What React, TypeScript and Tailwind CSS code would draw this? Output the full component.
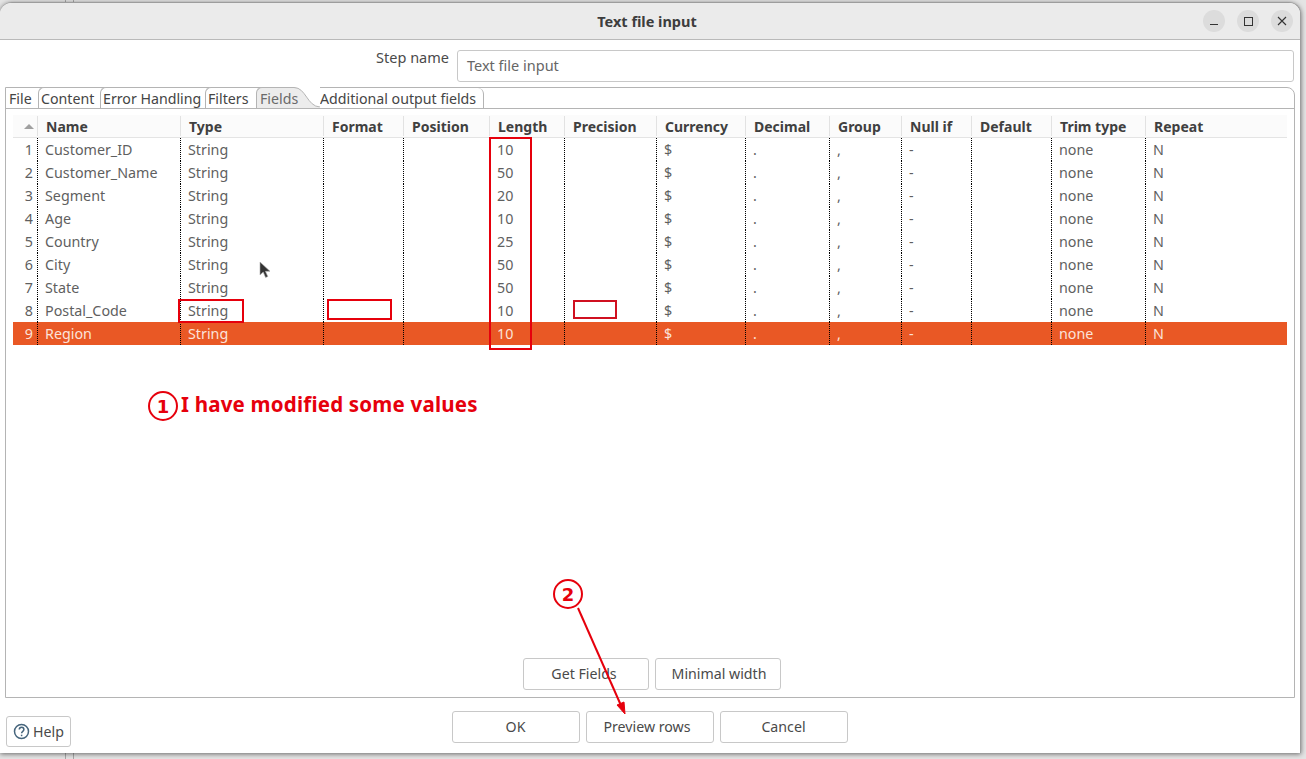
const columns = [
  { label: "Name", width: 143 },
  { label: "Type", width: 143 },
  { label: "Format", width: 80 },
  { label: "Position", width: 86 },
  { label: "Length", width: 75 },
  { label: "Precision", width: 92 },
  { label: "Currency", width: 89 },
  { label: "Decimal", width: 84 },
  { label: "Group", width: 72 },
  { label: "Null if", width: 70 },
  { label: "Default", width: 80 },
  { label: "Trim type", width: 94 },
  { label: "Repeat", width: 142 },
];

const fields = [
  ["Customer_ID", "10"],
  ["Customer_Name", "50"],
  ["Segment", "20"],
  ["Age", "10"],
  ["Country", "25"],
  ["City", "50"],
  ["State", "50"],
  ["Postal_Code", "10"],
  ["Region", "10"],
];

const tabs = [
  { label: "Content", width: 62 },
  { label: "Error Handling", width: 105 },
  { label: "Filters", width: 51 },
];

function PlainButton({ label, className }: { label: string; className: string }) {
  return (
    <button className={`h-[32px] rounded-[3px] border border-[#c8c8c8] bg-white text-[14.2px] text-[#4a4a4a] ${className}`}>
      {label}
    </button>
  );
}

function WindowButton({ children }: { children: React.ReactNode }) {
  return (
    <div className="flex h-[22px] w-[22px] items-center justify-center rounded-full bg-[#dcdcdc]">
      {children}
    </div>
  );
}

function FieldRow({ index, name, length }: { index: number; name: string; length: string }) {
  const selected = index === 9;
  const cells = [name, "String", "", "", length, "", "$", ".", ",", "-", "", "none", "N"];
  return (
    <div className={`flex h-[23px] items-center text-[14.3px] ${selected ? "bg-[#e95825] text-[#fbe3da]" : "text-[#5f5f5f]"}`}>
      <div className="h-full w-[24px] pr-[4px] text-right leading-[23px]">{index}</div>
      {cells.map((cell, i) => (
        <div
          key={columns[i].label}
          style={{ width: columns[i].width }}
          className="h-full border-l border-dotted border-black pl-[7px] leading-[23px]"
        >
          {cell}
        </div>
      ))}
    </div>
  );
}

export default function App() {
  return (
    <div className="relative h-[759px] w-[1306px] overflow-hidden bg-[#e4e4e4] pt-[2px] font-['Noto_Sans',sans-serif] text-[14px]">
      {/* bits of the window behind the dialog */}
      <div className="absolute left-[65px] top-[0px] h-[759px] w-[9px] border-x border-[#a8a8a8]" />

      <div className="relative flex h-[751px] w-[1301px] flex-col overflow-hidden rounded-t-[12px] border-t border-r border-[#9d9d9d] bg-white shadow-[0_1px_5px_rgba(0,0,0,0.55)]">
        {/* title bar */}
        <header className="relative flex h-[37px] shrink-0 items-center justify-center border-b border-[#b9b9b9] bg-[#ebebeb] pr-[6px] pt-[2px]">
          <span className="text-[14.5px] font-bold text-[#3d3d3d]">Text file input</span>
          <div className="absolute right-[7px] top-[7px] flex gap-[12px]">
            <WindowButton>
              <span className="mt-[6px] h-[1px] w-[8px] bg-[#333]" />
            </WindowButton>
            <WindowButton>
              <span className="h-[9px] w-[9px] border border-[#333]" />
            </WindowButton>
            <WindowButton>
              <svg width="10" height="10" viewBox="0 0 10 10" stroke="#333" strokeWidth="1.1">
                <path d="M1 1l8 8M9 1l-8 8" />
              </svg>
            </WindowButton>
          </div>
        </header>

        {/* step name */}
        <div className="flex h-[47px] shrink-0 pt-[10px]">
          <div className="-mt-[2px] w-[449px] text-right text-[14.5px] leading-[18px] text-[#4a4a4a]">Step name</div>
          <div className="ml-[8px] flex h-[32px] w-[837px] items-center rounded-[3px] border border-[#c8c8c8] pl-[9px] text-[14.5px] text-[#666]">
            Text file input
          </div>
        </div>

        {/* tab folder */}
        <div className="ml-[5px] flex h-[611px] w-[1290px] shrink-0 flex-col rounded-tr-[8px] border border-[#b4b4b4]">
          <div className="flex h-[20px] shrink-0 text-[14.2px] leading-[21px] text-[#454545]">
            <div className="w-[32px] pl-[3px]">File</div>
            {tabs.map((tab) => (
              <div
                key={tab.label}
                style={{ width: tab.width }}
                className="-mt-px rounded-tl-[6px] border-t border-l border-[#b4b4b4] bg-white pl-[2px]"
              >
                {tab.label}
              </div>
            ))}
            <div className="relative -mt-px w-[63px] rounded-tl-[6px] border-t border-l border-[#b4b4b4] bg-[#ececec] pl-[3px] text-[#6a6a6a]">
              Fields
              <svg className="absolute right-[-1px] top-[-1px]" width="26" height="21" viewBox="0 0 26 21" fill="none">
                <path d="M0 .5c12 0 13 19 26 19.5V0H0z" fill="#fff" />
                <path d="M0 .5c12 0 13 19 26 19.5" stroke="#b4b4b4" />
              </svg>
            </div>
            <div className="w-[165px] rounded-tr-[6px] border-r border-[#b4b4b4] pl-[1px]">
              Additional output fields
            </div>
          </div>

          <div className="flex min-h-0 flex-1 flex-col border-t border-[#b4b4b4]">
            {/* table */}
            <div className="ml-[7px] mt-[6px] w-[1274px] flex-1">
              <div className="flex h-[23px] items-center border-b border-[#e4e4e4] bg-[#fbfbfb] font-bold text-[#404040]">
                <div className="flex h-full w-[24px] items-center justify-center pl-[7px]">
                  <span className="h-0 w-0 border-x-[5px] border-b-[5px] border-x-transparent border-b-[#a0a0a0]" />
                </div>
                {columns.map((column) => (
                  <div
                    key={column.label}
                    style={{ width: column.width }}
                    className="h-[20px] border-l border-[#e2e2e2] pl-[8px] text-[14px] leading-[22px]"
                  >
                    {column.label}
                  </div>
                ))}
              </div>
              {fields.map(([name, length], i) => (
                <FieldRow key={name} index={i + 1} name={name} length={length} />
              ))}
            </div>

            {/* field buttons */}
            <div className="mb-[7px] flex shrink-0 justify-center gap-[6px] pl-[3px]">
              <PlainButton label="Get Fields" className="w-[126px] pr-[3px]" />
              <PlainButton label="Minimal width" className="w-[126px] pl-[3px]" />
            </div>
          </div>
        </div>

        {/* dialog buttons */}
        <div className="relative flex flex-1 justify-center gap-[6px] pr-[1px] pt-[13px]">
          <PlainButton label="OK" className="w-[128px]" />
          <PlainButton label="Preview rows" className="w-[128px] pr-[5px]" />
          <PlainButton label="Cancel" className="w-[128px]" />
          <button className="absolute left-[6px] top-[18px] flex h-[31px] w-[65px] items-center justify-center gap-[3px] rounded-[3px] border border-[#c8c8c8] text-[14.2px] text-[#4a4a4a]">
            <svg width="17" height="17" viewBox="0 0 17 17" fill="none" stroke="#46657c" strokeWidth="1.5">
              <circle cx="8.5" cy="8.5" r="7" />
              <path d="M6.3 6.6c0-3 4.6-3 4.6 0 0 1.8-2.3 1.7-2.3 3.6" />
              <path d="M8.6 11.7v1.5" />
            </svg>
            Help
          </button>
        </div>
      </div>

      {/* screenshot annotations */}
      <div className="absolute left-[489px] top-[137px] h-[213px] w-[43px] border-2 border-[#e6000c]" />
      <div className="absolute left-[178px] top-[299px] h-[24px] w-[66px] border-2 border-[#e6000c]" />
      <div className="absolute left-[327px] top-[299px] h-[21px] w-[65px] border-2 border-[#e6000c]" />
      <div className="absolute left-[573px] top-[300px] h-[19px] w-[44px] border-2 border-[#d01020]" />
      <div className="absolute left-[148px] top-[391px] flex h-[30px] w-[30px] items-center justify-center rounded-full border-2 border-[#e6000c] font-['DejaVu_Sans',sans-serif] text-[18px] font-bold text-[#e6000c]">
        1
      </div>
      <div className="absolute left-[181px] top-[390px] text-[20.5px] font-bold leading-[28px] tracking-[0.2px] text-[#e6000c]">
        I have modified some values
      </div>
      <div className="absolute left-[553px] top-[579px] flex h-[30px] w-[30px] items-center justify-center rounded-full border-2 border-[#e6000c] font-['DejaVu_Sans',sans-serif] text-[18px] font-bold text-[#e6000c]">
        2
      </div>
      <svg className="absolute left-[570px] top-[600px]" width="64" height="120" viewBox="0 0 64 120" fill="none">
        <path d="M8 8L53 110" stroke="#e6000c" strokeWidth="2" />
        <path d="M55 114l-8-9 7-3z" fill="#e6000c" stroke="#e6000c" />
      </svg>
      <svg className="absolute left-[259px] top-[261px]" width="13" height="19" viewBox="0 0 13 19">
        <path d="M1 1v13l3.2-3 2.4 5.5 2.2-1-2.4-5.2H11z" fill="#333" stroke="#aaa" strokeWidth="0.6" />
      </svg>
    </div>
  );
}
